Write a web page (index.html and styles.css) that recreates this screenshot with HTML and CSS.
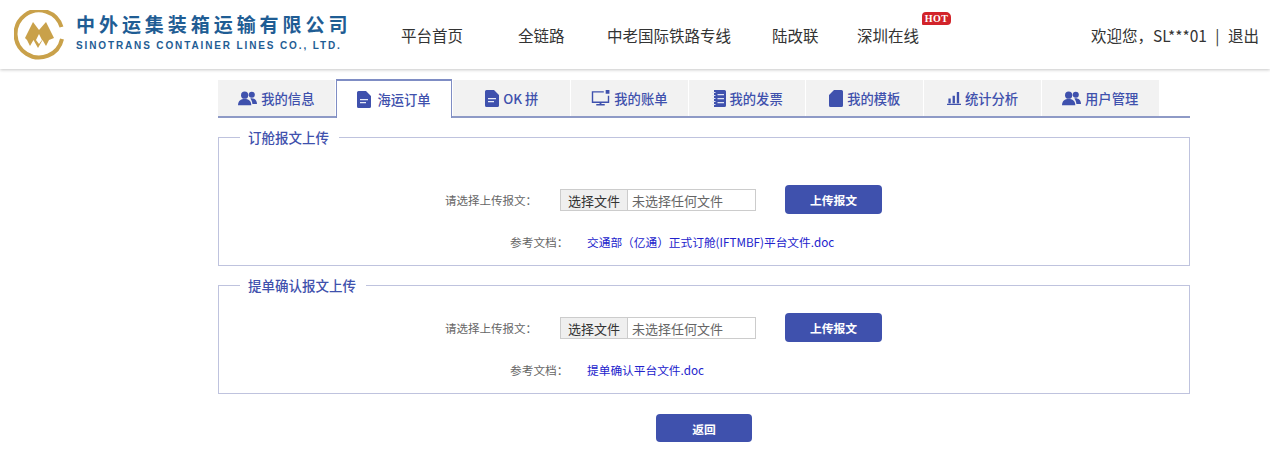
FILE: index.html
```html
<!DOCTYPE html>
<html lang="zh-CN">
<head>
  <meta charset="UTF-8" />
  <title>中外运集装箱运输有限公司</title>
  <link rel="stylesheet" href="styles.css">
</head>
<body>
<svg class="icon-defs" width="0" height="0">
  <symbol id="i-users" viewBox="0 0 20 16">
    <circle cx="7" cy="5" r="3.8"/><circle cx="14.5" cy="4.6" r="3.2"/>
    <path d="M0 15.500c0-4.500 3-6.500 7-6.500s7 2 7 6.500z"/><path d="M13 8.400c4-.6 7 1.600 7 6h-4.800c-.3-2.400-1-4.400-2.200-6z"/>
  </symbol>
  <symbol id="i-doc" viewBox="0 0 14 17">
    <path d="M0 1.500A1.500 1.500 0 0 1 1.500 0H9l5 5v10.500a1.500 1.500 0 0 1-1.500 1.500h-11A1.500 1.500 0 0 1 0 15.500z"/>
    <path d="M3 8h8v1.300H3zM3 11h6v1.300H3z" fill="#e8ecf8"/>
  </symbol>
  <symbol id="i-screen" viewBox="0 0 19 17">
    <path d="M13 2H1v11h17V6" fill="none" stroke="#3f51ad" stroke-width="1.500"/>
    <path d="M15 0h4v4h-4zM8.500 13h2v2h-2zM5 15h9v1.500H5z"/>
  </symbol>
  <symbol id="i-book" viewBox="0 0 14 17">
    <path d="M2 0h10.500A1.500 1.500 0 0 1 14 1.500v14a1.500 1.500 0 0 1-1.500 1.500H2z"/>
    <path d="M0 2h3.500v1H0zM0 5h3.500v1H0zM0 8h3.500v1H0zM0 11h3.500v1H0zM0 14h3.500v1H0zM5.500 4H12v1.200H5.500zM5.500 8H12v1.200H5.500zM5.500 12H12v1.200H5.500z" fill="#dfe3f3"/>
  </symbol>
  <symbol id="i-file" viewBox="0 0 14 17">
    <path d="M5 0h7.500A1.500 1.500 0 0 1 14 1.500v14a1.500 1.500 0 0 1-1.500 1.500h-11A1.500 1.500 0 0 1 0 15.500V5z"/>
  </symbol>
  <symbol id="i-chart" viewBox="0 0 15 14">
    <path d="M0 12.500h15V14H0zM1.500 7h2.500v5H1.500zM6 4h2.500v8H6zM10.500 0H13v12h-2.500z"/>
  </symbol>
</svg>

<div class="page">
  <header class="top">
    <a class="logo">
      <svg class="logo-mark" width="50" height="50" viewBox="0 0 50 50">
        <path d="M47.500 17A23.500 23.500 0 1 0 48 29" fill="none" stroke="#c9a14a" stroke-width="4"/>
        <path d="M11 28L19 12l6 8 7-8 8 16-5 2-3 6-3.500-6-4.500 8-4.500-8-3.500 6-3-6z" fill="#c9a14a"/>
        <path d="M25 24l-3 6 3 4 3-4z" fill="#fff"/>
      </svg>
      <div class="logo-text">
        <div class="logo-cn">中外运集装箱运输有限公司</div>
        <div class="logo-en">SINOTRANS CONTAINER LINES CO., LTD.</div>
      </div>
    </a>
    <nav class="main-nav">
      <a class="n1">平台首页</a>
      <a class="n2">全链路</a>
      <a class="n3">中老国际铁路专线</a>
      <a class="n4">陆改联</a>
      <a class="n5">深圳在线<span class="hot">HOT</span></a>
    </nav>
    <div class="user">欢迎您，SL***01 <i>|</i> 退出</div>
  </header>

  <main class="content">
    <ul class="tabs">
      <li><svg class="t-icon wide"><use href="#i-users"/></svg>我的信息</li>
      <li class="active"><svg class="t-icon"><use href="#i-doc"/></svg>海运订单</li>
      <li><svg class="t-icon"><use href="#i-doc"/></svg>OK 拼</li>
      <li><svg class="t-icon wide"><use href="#i-screen"/></svg>我的账单</li>
      <li><svg class="t-icon"><use href="#i-book"/></svg>我的发票</li>
      <li><svg class="t-icon"><use href="#i-file"/></svg>我的模板</li>
      <li><svg class="t-icon"><use href="#i-chart"/></svg>统计分析</li>
      <li><svg class="t-icon wide"><use href="#i-users"/></svg>用户管理</li>
    </ul>

    <fieldset class="box box-a">
      <legend>订舱报文上传</legend>
      <div class="row">
        <label class="lbl">请选择上传报文：</label>
        <div class="file"><span class="file-btn">选择文件</span><span class="file-name">未选择任何文件</span></div>
        <button class="btn">上传报文</button>
      </div>
      <div class="ref"><span class="ref-lbl">参考文档：</span><a class="ref-link">交通部（亿通）正式订舱(IFTMBF)平台文件.doc</a></div>
    </fieldset>

    <fieldset class="box box-b">
      <legend>提单确认报文上传</legend>
      <div class="row">
        <label class="lbl">请选择上传报文：</label>
        <div class="file"><span class="file-btn">选择文件</span><span class="file-name">未选择任何文件</span></div>
        <button class="btn">上传报文</button>
      </div>
      <div class="ref"><span class="ref-lbl">参考文档：</span><a class="ref-link">提单确认平台文件.doc</a></div>
    </fieldset>

    <div class="back"><button class="btn">返回</button></div>
  </main>
</div>
</body>
</html>
```

FILE: styles.css
```css
* {
  box-sizing: border-box;
}
body {
  margin: 0;
  background: #fff;
  font-family: "Noto Sans CJK SC", "Noto Sans", sans-serif;
  color: #333;
}
.icon-defs {
  position: absolute;
}
.page {
  width: 1270px;
  overflow: hidden;
}
.top {
  height: 69px;
  display: flex;
  align-items: center;
  background: #fff;
  box-shadow: 0 1px 3px rgba(0,0,0,0.22);
  padding: 0 11px 0 14px;
}
.logo {
  display: flex;
  align-items: center;
  width: 387px;
}
.logo-mark {
  flex: none;
  margin-right: 12px;
}
.logo-cn {
  font-size: 19px;
  line-height: 24px;
  font-weight: 700;
  letter-spacing: 3.95px;
  color: #1f5d94;
  white-space: nowrap;
  margin-top: -3px;
}
.logo-en {
  font-size: 10px;
  line-height: 16px;
  margin-top: 2px;
  font-family: "Liberation Sans", sans-serif;
  font-weight: 700;
  letter-spacing: 1.87px;
  color: #1f5d94;
  white-space: nowrap;
}
.main-nav {
  display: flex;
  font-size: 15.500px;
  color: #333;
}
.main-nav a {
  position: relative;
  white-space: nowrap;
}
.n1 { width: 117px; }
.n2 { width: 89px; }
.n3 { width: 165px; }
.n4 { width: 85px; }
.hot {
  position: absolute;
  left: 65px;
  top: -12px;
  width: 29px;
  height: 13px;
  background: #d2232a;
  border-radius: 4px 5px 4px 1px;
  color: #fff;
  font: 700 10px/13px "Liberation Serif", serif;
  letter-spacing: 0.5px;
  text-align: center;
}
.user {
  margin-left: auto;
  font-size: 15.500px;
  color: #333;
  white-space: nowrap;
}
.user i {
  font-style: normal;
  margin: 0 5px;
}
.content {
  width: 972px;
  margin: 11px 0 0 218px;
}
.tabs {
  display: flex;
  list-style: none;
  margin: 0;
  padding: 0;
  gap: 1px;
  height: 38px;
  border-bottom: 2px solid #8e9ac6;
  font-size: 13.300px;
  font-weight: 500;
  color: #3f51ad;
}
.tabs li {
  width: 116.700px;
  height: 36px;
  background: #f2f2f2;
  display: flex;
  align-items: center;
  justify-content: center;
  gap: 4px;
}
.tabs li.active {
  height: 39px;
  margin-top: -1px;
  background: #fff;
  border: 1px solid #7f8dc4;
  border-top-width: 2px;
  border-bottom: none;
  gap: 6px;
}
.t-icon {
  width: 14px;
  height: 17px;
  fill: #3f51ad;
}
.t-icon.wide {
  width: 19px;
  height: 16px;
}
.box {
  margin: 0;
  padding: 0;
  border: 1px solid #bfc3de;
  border-radius: 0;
  min-width: 0;
}
.box legend {
  margin-left: 21px;
  padding: 0 10px 0 8px;
  font-size: 13.500px;
  line-height: 18px;
  font-weight: 500;
  color: #3f51ad;
}
.box-a {
  margin-top: 10px;
  height: 138px;
}
.box-a .row {
  margin-top: 39px;
}
.box-b {
  margin-top: 10px;
  height: 118px;
}
.box-b .row {
  margin-top: 19px;
}
.row {
  display: flex;
  align-items: center;
  height: 29px;
  padding-left: 226px;
}
.lbl {
  width: 115px;
  font-size: 11.500px;
  color: #666;
}
.file {
  display: flex;
  width: 196px;
  height: 22px;
  border: 1px solid #ccc;
  font-size: 13px;
  line-height: 22px;
}
.file-btn {
  width: 67px;
  background: #efefef;
  border-right: 1px solid #ccc;
  text-align: center;
  color: #333;
}
.file-name {
  padding-left: 4px;
  color: #666;
  white-space: nowrap;
}
.btn {
  border: none;
  width: 97px;
  height: 29px;
  border-radius: 4px;
  background: #3f51ad;
  color: #fff;
  font-family: inherit;
  font-size: 11.800px;
  font-weight: 700;
  padding: 0;
}
.row .btn {
  margin-left: 29px;
}
.ref {
  display: flex;
  margin-top: 20px;
  padding-left: 291px;
  font-size: 11.700px;
  line-height: 16px;
}
.ref-lbl {
  width: 77px;
  color: #666;
}
.ref-link {
  color: #2222cc;
  white-space: nowrap;
}
.back {
  margin-top: 20px;
  display: flex;
  justify-content: center;
}
.back .btn {
  width: 96px;
  height: 28px;
}
```
